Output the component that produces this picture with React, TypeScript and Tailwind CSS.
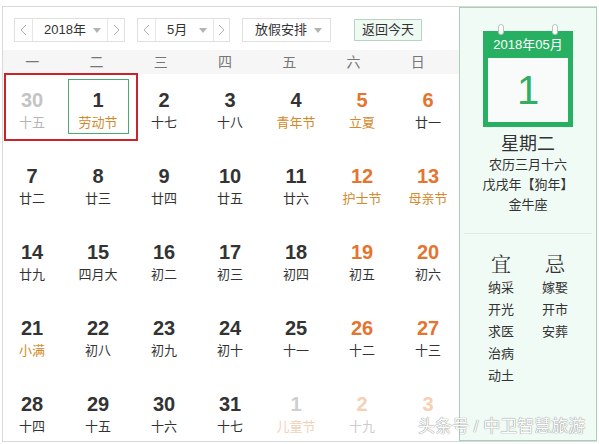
import React from 'react';

type Day = {
  n: string;
  sub: string;
  numColor?: string;
  subColor?: string;
};

const weekdays = ['一', '二', '三', '四', '五', '六', '日'];

const DARK = 'text-[#333333]';
const ORANGE = 'text-[#e5742f]';
const GOLD = 'text-[#d48a2c]';

const rows: Day[][] = [
  [
    { n: '30', sub: '十五', numColor: 'text-[#c4c4c4]', subColor: 'text-[#b5b5b5]' },
    { n: '1', sub: '劳动节', subColor: GOLD },
    { n: '2', sub: '十七' },
    { n: '3', sub: '十八' },
    { n: '4', sub: '青年节', subColor: GOLD },
    { n: '5', sub: '立夏', numColor: ORANGE, subColor: GOLD },
    { n: '6', sub: '廿一', numColor: ORANGE },
  ],
  [
    { n: '7', sub: '廿二' },
    { n: '8', sub: '廿三' },
    { n: '9', sub: '廿四' },
    { n: '10', sub: '廿五' },
    { n: '11', sub: '廿六' },
    { n: '12', sub: '护士节', numColor: ORANGE, subColor: GOLD },
    { n: '13', sub: '母亲节', numColor: ORANGE, subColor: GOLD },
  ],
  [
    { n: '14', sub: '廿九' },
    { n: '15', sub: '四月大' },
    { n: '16', sub: '初二' },
    { n: '17', sub: '初三' },
    { n: '18', sub: '初四' },
    { n: '19', sub: '初五', numColor: ORANGE },
    { n: '20', sub: '初六', numColor: ORANGE },
  ],
  [
    { n: '21', sub: '小满', subColor: GOLD },
    { n: '22', sub: '初八' },
    { n: '23', sub: '初九' },
    { n: '24', sub: '初十' },
    { n: '25', sub: '十一' },
    { n: '26', sub: '十二', numColor: ORANGE },
    { n: '27', sub: '十三', numColor: ORANGE },
  ],
  [
    { n: '28', sub: '十四' },
    { n: '29', sub: '十五' },
    { n: '30', sub: '十六' },
    { n: '31', sub: '十七' },
    { n: '1', sub: '儿童节', numColor: 'text-[#cfcfcf]', subColor: 'text-[#f1d2b8]' },
    { n: '2', sub: '十九', numColor: 'text-[#f5d0b4]', subColor: 'text-[#cccccc]' },
    { n: '3', sub: '', numColor: 'text-[#f5d0b4]', subColor: 'text-[#cccccc]' },
  ],
];

const good = ['纳采', '开光', '求医', '治病', '动土'];
const bad = ['嫁娶', '开市', '安葬'];

function Chevron({ dir }: { dir: 'left' | 'right' }) {
  return (
    <svg width="7" height="12" viewBox="0 0 7 12" fill="none">
      <path
        d={dir === 'left' ? 'M6 1 L1 6 L6 11' : 'M1 1 L6 6 L1 11'}
        stroke="#b0b0b0"
        strokeWidth="1"
      />
    </svg>
  );
}

function Caret() {
  return (
    <svg width="8" height="5" viewBox="0 0 8 5">
      <path d="M0 0 H8 L4 5 Z" fill="#b3b3b3" />
    </svg>
  );
}

function Stepper({ label, width, midWidth }: { label: string; width: string; midWidth: string }) {
  return (
    <div className={`flex h-[24px] border border-[#e0e0e0] bg-white ${width}`}>
      <div className="flex w-[18px] items-center justify-center border-r border-[#e6e6e6]">
        <Chevron dir="left" />
      </div>
      <div className={`flex items-center justify-between pl-[11px] pr-[6px] ${midWidth}`}>
        <span className="text-[13px] text-[#333]">{label}</span>
        <Caret />
      </div>
      <div className="flex flex-1 items-center justify-center border-l border-[#e6e6e6]">
        <Chevron dir="right" />
      </div>
    </div>
  );
}

export default function App() {
  return (
    <div
      className="h-[444px] w-[599px] overflow-hidden bg-white pl-[2px] pt-[6px]"
      style={{ fontFamily: '"Liberation Sans", Arial, "Noto Sans CJK SC", sans-serif' }}
    >
      <div className="relative flex h-[436px] w-[595px] overflow-hidden border-y border-l border-[#d9d9d9]">
        {/* Left: calendar */}
        <div className="relative flex w-[456px] flex-col">
          <div className="flex h-[43px] shrink-0 items-start gap-[12px] pl-[11px] pt-[11px]">
            <Stepper label="2018年" width="w-[111px]" midWidth="w-[74px]" />
            <Stepper label="5月" width="w-[93px]" midWidth="w-[57px]" />
            <div className="flex h-[24px] w-[89px] items-center justify-between border border-[#e0e0e0] bg-white pl-[12px] pr-[8px]">
              <span className="text-[13px] text-[#333]">放假安排</span>
              <Caret />
            </div>
            <div className="ml-[11px] mt-[1px] flex h-[22px] w-[68px] items-center justify-center border border-[#b7d3c3] bg-[#effaf3] text-[13px] text-[#333]">
              返回今天
            </div>
          </div>

          <div className="h-[24px] shrink-0 bg-[#f6f6f6]">
            <div className="-ml-[3px] grid h-full w-[450px] grid-cols-7 items-center">
              {weekdays.map((w) => (
                <div key={w} className="text-center text-[14px] text-[#777]">
                  {w}
                </div>
              ))}
            </div>
          </div>

          <div className="-ml-[4px] flex w-[462px] shrink-0 flex-col">
            {rows.map((row, ri) => (
              <div key={ri} className="grid h-[76px] shrink-0 grid-cols-7">
                {row.map((d, di) => (
                  <div key={di} className="flex flex-col items-center pt-[15px]">
                    <div className={`text-[20px] font-bold leading-[22px] ${d.numColor ?? DARK}`}>{d.n}</div>
                    <div className={`mt-[4px] h-[16px] text-[13px] leading-[16px] ${d.subColor ?? DARK}`}>{d.sub}</div>
                  </div>
                ))}
              </div>
            ))}
          </div>

          {/* selection highlights */}
          <div className="absolute left-[1px] top-[66px] h-[68px] w-[134px] border-2 border-[#c9232c]" />
          <div className="absolute left-[65px] top-[72px] h-[55px] w-[61px] border border-[#4ea872]" />
        </div>

        {/* Right: today panel */}
        <div className="flex flex-1 flex-col items-center border border-[#a8cfb8] bg-[#f1fbf5]">
          <div className="relative mt-[23px] flex h-[96px] w-[90px] shrink-0 flex-col bg-[#28b062] px-[5px] pb-[5px]">
            <div className="absolute left-[15px] top-[-7px] h-[11px] w-[6px] rounded-full border border-[#b9c4be] bg-white" />
            <div className="absolute left-[69px] top-[-7px] h-[11px] w-[6px] rounded-full border border-[#b9c4be] bg-white" />
            <div className="flex h-[27px] items-center justify-center text-[13px] text-white">2018年05月</div>
            <div className="flex flex-1 items-center justify-center bg-[#f9fbfa] text-[40px] leading-none text-[#2fae64]">
              1
            </div>
          </div>
          <div className="mt-[6px] text-[18px] leading-[22px] text-[#333]">星期二</div>
          <div className="text-[13px] leading-[20px] text-[#333]">农历三月十六</div>
          <div className="text-[13px] leading-[20px] text-[#333]">戊戌年【狗年】</div>
          <div className="text-[13px] leading-[20px] text-[#333]">金牛座</div>
          <div className="mt-[18px] h-px w-[128px] shrink-0 bg-[#dfeae3]" />
          <div className="mt-[17px] grid w-full grid-cols-2 px-[14px]">
            <div className="flex flex-col items-center">
              <div className="text-[20px] leading-[26px] text-[#333]" style={{ fontFamily: '"Noto Serif CJK SC", "Noto Sans CJK SC", serif' }}>宜</div>
              {good.map((g) => (
                <div key={g} className="text-[13px] leading-[22px] text-[#333]">{g}</div>
              ))}
            </div>
            <div className="flex flex-col items-center">
              <div className="text-[20px] leading-[26px] text-[#333]" style={{ fontFamily: '"Noto Serif CJK SC", "Noto Sans CJK SC", serif' }}>忌</div>
              {bad.map((b) => (
                <div key={b} className="text-[13px] leading-[22px] text-[#333]">{b}</div>
              ))}
            </div>
          </div>
        </div>

        {/* watermark */}
        <div className="absolute left-[415px] top-[411px] text-[17px] leading-[18px] text-white [text-shadow:0_0_1px_#8a8a8a,0_0_1px_#8a8a8a]">
          头条号 / 中卫智慧旅游
        </div>
      </div>
    </div>
  );
}
